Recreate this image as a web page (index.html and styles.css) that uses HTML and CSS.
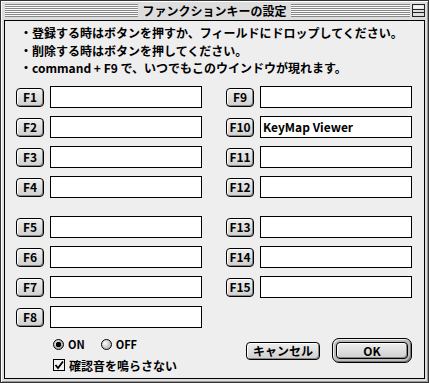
FILE: index.html
```html
<!DOCTYPE html>
<html lang="ja">
<head>
  <meta charset="UTF-8">
  <title>ファンクションキーの設定</title>
  <link rel="stylesheet" href="styles.css">
</head>
<body>
  <div class="window">
    <div class="titlebar">
      <div class="stripes"></div>
      <div class="title">ファンクションキーの設定</div>
      <div class="title-right">
        <div class="stripes"></div>
        <svg class="shade" width="13" height="13" viewBox="0 0 13 13">
          <rect x="0.5" y="0.5" width="12" height="12" fill="#ddd" stroke="#222"/>
          <rect x="1.5" y="1.5" width="10" height="3" fill="#f4f4f4"/>
          <line x1="1" y1="5.5" x2="12" y2="5.5" stroke="#222"/>
          <line x1="1" y1="8.5" x2="12" y2="8.5" stroke="#222"/>
        </svg>
      </div>
    </div>

    <div class="content">
      <ul class="notes">
        <li>・登録する時はボタンを押すか、フィールドにドロップしてください。</li>
        <li>・削除する時はボタンを押してください。</li>
        <li>・command + F9 で、いつでもこのウインドウが現れます。</li>
      </ul>

      <div class="keys">
        <div class="col">
          <div class="group">
            <div class="row"><button class="btn fkey">F1</button><div class="field"></div></div>
            <div class="row"><button class="btn fkey">F2</button><div class="field"></div></div>
            <div class="row"><button class="btn fkey">F3</button><div class="field"></div></div>
            <div class="row"><button class="btn fkey">F4</button><div class="field"></div></div>
          </div>
          <div class="group">
            <div class="row"><button class="btn fkey">F5</button><div class="field"></div></div>
            <div class="row"><button class="btn fkey">F6</button><div class="field"></div></div>
            <div class="row"><button class="btn fkey">F7</button><div class="field"></div></div>
            <div class="row"><button class="btn fkey">F8</button><div class="field"></div></div>
          </div>
          <div class="options">
            <div class="opt-row">
              <label class="opt"><span class="radio on"></span><span class="opt-label">ON</span></label>
              <label class="opt"><span class="radio"></span><span class="opt-label">OFF</span></label>
            </div>
            <label class="opt">
              <svg class="check" width="12" height="12" viewBox="0 0 12 12">
                <rect x="0.5" y="0.5" width="11" height="11" fill="#f2f2f2" stroke="#000"/>
                <path d="M2.5 6 L5 9 L10 2.5" fill="none" stroke="#000" stroke-width="1.8"/>
              </svg>
              <span>確認音を鳴らさない</span>
            </label>
          </div>
        </div>

        <div class="col">
          <div class="group">
            <div class="row"><button class="btn fkey">F9</button><div class="field"></div></div>
            <div class="row"><button class="btn fkey">F10</button><div class="field">KeyMap Viewer</div></div>
            <div class="row"><button class="btn fkey">F11</button><div class="field"></div></div>
            <div class="row"><button class="btn fkey">F12</button><div class="field"></div></div>
          </div>
          <div class="group">
            <div class="row"><button class="btn fkey">F13</button><div class="field"></div></div>
            <div class="row"><button class="btn fkey">F14</button><div class="field"></div></div>
            <div class="row"><button class="btn fkey">F15</button><div class="field"></div></div>
          </div>
          <div class="actions">
            <button class="btn cancel">キャンセル</button>
            <div class="default-ring"><button class="btn">OK</button></div>
          </div>
        </div>
      </div>
    </div>
  </div>
</body>
</html>
```

FILE: styles.css
```css
body { margin: 0; background: #ddd; font-family: "Noto Sans CJK JP", sans-serif; font-size: 12px; font-weight: bold; color: #000; }

.window { width: 429px; height: 383px; box-sizing: border-box; border: 1px solid #333; background: #dddddd; padding: 0 3px 3px; display: flex; flex-direction: column; box-shadow: inset 1px 1px 0 #fff, inset -1px -1px 0 #999; }

/* title bar */
.titlebar { height: 19px; display: grid; grid-template-columns: 1fr auto 1fr; align-items: center; }
.stripes { height: 13px; margin-left: 1px; background: repeating-linear-gradient(to bottom, #888 0 1px, #fafafa 1px 2px); }
.title { padding: 0 4px; line-height: 19px; }
.title-right { display: flex; align-items: center; gap: 2px; }
.title-right .stripes { flex: 1; margin-left: 0; }
.shade { display: block; }

.content { flex: 1; border: 1px solid #000; background: #eeeeee; padding: 3px 11px 0; }

.notes { margin: 0 0 9.5px; padding: 0 0 0 4px; list-style: none; line-height: 17.5px; }

/* key rows */
.keys { display: grid; grid-template-columns: 186px 186px; column-gap: 24px; }
.col { display: flex; flex-direction: column; }
.group { display: flex; flex-direction: column; gap: 8px; }
.group + .group { margin-top: 18px; }
.row { display: flex; align-items: center; gap: 6px; height: 22px; }
.field { flex: 1; height: 22px; box-sizing: border-box; border: 1px solid #000; background: #fff; padding: 0 2px; line-height: 20px; }

.btn { box-sizing: border-box; border: 1px solid #000; border-radius: 4px; background: linear-gradient(#eee, #cfcfcf); box-shadow: inset 1px 1px 0 #fff, inset -1px -1px 0 #888; font: inherit; line-height: 1; color: #000; padding: 0; display: flex; align-items: center; justify-content: center; }
.fkey { width: 28px; height: 19px; }

/* options */
.options { padding-left: 37px; margin-top: 9px; display: flex; flex-direction: column; gap: 7px; }
.opt-row { display: flex; align-items: center; gap: 16px; height: 14px; }
.opt { display: flex; align-items: center; gap: 4px; height: 14px; }
.opt-label { font-size: 11px; }
.radio { width: 11px; height: 11px; box-sizing: border-box; border: 1px solid #000; border-radius: 50%; background: radial-gradient(circle at 35% 35%, #fff, #999); }
.radio.on { background: radial-gradient(circle, #000 0 2.5px, transparent 3px), radial-gradient(circle at 35% 35%, #eee, #888); }
.check { display: block; }

/* dialog buttons */
.actions { margin-top: 40px; display: flex; justify-content: flex-end; align-items: center; gap: 12px; }
.cancel { width: 74px; height: 18px; }
.default-ring { box-sizing: border-box; width: 80px; height: 25px; border: 1px solid #000; border-radius: 7px; padding: 3px; background: #bbb; box-shadow: inset 1px 1px 0 #eee, inset -1px -1px 0 #777; }
.default-ring .btn { width: 100%; height: 100%; }
```
